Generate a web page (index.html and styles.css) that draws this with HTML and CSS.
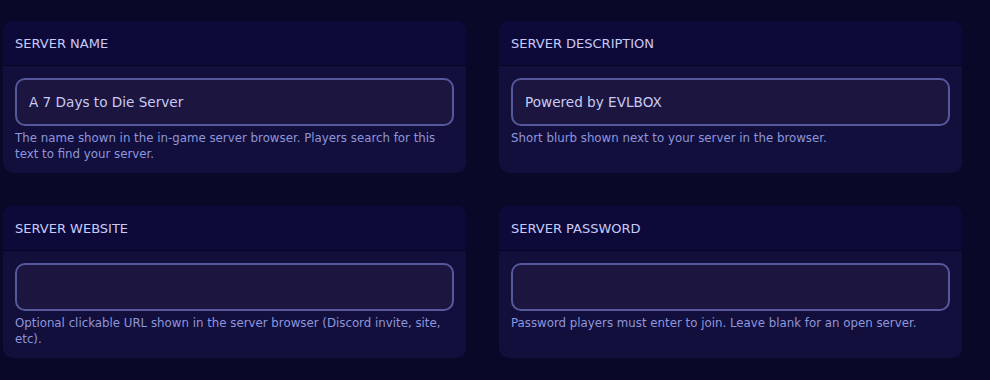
FILE: index.html
```html
<!DOCTYPE html>
<html lang="en">
<head>
    <meta charset="UTF-8">
    <meta name="viewport" content="width=device-width, initial-scale=1.0">
    <title>Server Settings</title>
    <link rel="stylesheet" href="styles.css">
</head>
<body>
    <div class="settings-grid">
        <div class="setting-card">
            <div class="card-header">Server Name</div>
            <div class="card-body">
                <input type="text" class="text-field" value="A 7 Days to Die Server">
                <p class="help-text">The name shown in the in-game server browser. Players search for this text to find your server.</p>
            </div>
        </div>

        <div class="setting-card">
            <div class="card-header">Server Description</div>
            <div class="card-body">
                <input type="text" class="text-field" value="Powered by EVLBOX">
                <p class="help-text">Short blurb shown next to your server in the browser.</p>
            </div>
        </div>

        <div class="setting-card">
            <div class="card-header">Server Website</div>
            <div class="card-body">
                <input type="text" class="text-field" value="">
                <p class="help-text">Optional clickable URL shown in the server browser (Discord invite, site, etc).</p>
            </div>
        </div>

        <div class="setting-card">
            <div class="card-header">Server Password</div>
            <div class="card-body">
                <input type="password" class="text-field" value="">
                <p class="help-text">Password players must enter to join. Leave blank for an open server.</p>
            </div>
        </div>
    </div>
</body>
</html>
```

FILE: styles.css
```css
* {
    margin: 0;
    padding: 0;
    box-sizing: border-box;
}

body {
    font-family: 'DejaVu Sans', 'Open Sans', sans-serif;
    background: #0a0829;
    min-height: 100vh;
}

.settings-grid {
    display: grid;
    grid-template-columns: 463px 463px;
    column-gap: 33px;
    row-gap: 33px;
    padding: 21px 0 0 3px;
}

.setting-card {
    background: #120f3c;
    border-radius: 10px;
    overflow: hidden;
    display: flex;
    flex-direction: column;
}

.card-header {
    height: 45px;
    display: flex;
    align-items: center;
    padding: 0 12px;
    background: #0d0a3a;
    border-bottom: 1px solid #070520;
    color: #c9cbf7;
    font-size: 13px;
    text-transform: uppercase;
}

.card-body {
    padding: 12px 12px 11px;
    flex: 1;
}

.text-field {
    display: block;
    width: 100%;
    height: 48px;
    padding: 0 12px;
    background: #1b1540;
    border: 2px solid #57579b;
    border-radius: 10px;
    color: #c9caf2;
    font-family: inherit;
    font-size: 13.6px;
    outline: none;
}

.help-text {
    margin-top: 4px;
    color: #8f96dc;
    font-size: 11.8px;
    line-height: 16px;
}
```
